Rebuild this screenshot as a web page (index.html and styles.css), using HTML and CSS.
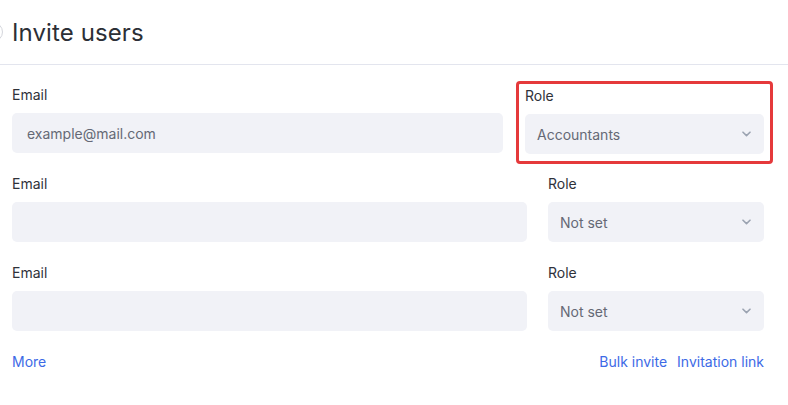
FILE: index.html
```html
<!DOCTYPE html>
<html lang="en">
<head>
<meta charset="utf-8">
<title>Invite users</title>
<link rel="stylesheet" href="styles.css">
</head>
<body>
<div class="page">
  <header class="header">
    <span class="back-ring"></span>
    <h1 class="title">Invite users</h1>
  </header>
  <div class="form">
    <div class="row row-highlight">
      <div class="field">
        <label class="label">Email</label>
        <div class="input placeholder">example@mail.com</div>
      </div>
      <div class="field role-box">
        <label class="label">Role</label>
        <div class="input select"><span>Accountants</span>
          <svg class="chev" width="9" height="6" viewBox="0 0 9 6"><path d="M1 1.2 L4.5 4.6 L8 1.2" fill="none" stroke="#9ba3b1" stroke-width="1.6" stroke-linecap="round" stroke-linejoin="round"/></svg>
        </div>
      </div>
    </div>
    <div class="row">
      <div class="field">
        <label class="label">Email</label>
        <div class="input"></div>
      </div>
      <div class="field">
        <label class="label">Role</label>
        <div class="input select"><span>Not set</span>
          <svg class="chev" width="9" height="6" viewBox="0 0 9 6"><path d="M1 1.2 L4.5 4.6 L8 1.2" fill="none" stroke="#9ba3b1" stroke-width="1.6" stroke-linecap="round" stroke-linejoin="round"/></svg>
        </div>
      </div>
    </div>
    <div class="row">
      <div class="field">
        <label class="label">Email</label>
        <div class="input"></div>
      </div>
      <div class="field">
        <label class="label">Role</label>
        <div class="input select"><span>Not set</span>
          <svg class="chev" width="9" height="6" viewBox="0 0 9 6"><path d="M1 1.2 L4.5 4.6 L8 1.2" fill="none" stroke="#9ba3b1" stroke-width="1.6" stroke-linecap="round" stroke-linejoin="round"/></svg>
        </div>
      </div>
    </div>
    <div class="links">
      <a class="link">More</a>
      <div class="links-right">
        <a class="link">Bulk invite</a>
        <a class="link">Invitation link</a>
      </div>
    </div>
  </div>
</div>
</body>
</html>
```
FILE: styles.css
```css
* { box-sizing: border-box; }
html, body { margin: 0; padding: 0; background: #ffffff; }
body {
  font-family: Inter, "Noto Sans", "Liberation Sans", sans-serif;
  color: #2f323a;
  width: 788px;
  height: 405px;
  overflow: hidden;
}
.header {
  height: 65px;
  display: flex;
  align-items: center;
  gap: 9px;
  border-bottom: 1px solid #e3e5ee;
}
.back-ring {
  width: 20px;
  height: 20px;
  margin-left: -17px;
  border: 1px solid #d4d6dc;
  border-radius: 50%;
  flex: none;
}
.title {
  margin: 0;
  font-size: 24px;
  font-weight: 400;
  color: #2c2f36;
  letter-spacing: 0.1px;
}
.form {
  padding: 20px 24px 0 12px;
  display: flex;
  flex-direction: column;
  gap: 21px;
}
.row {
  display: grid;
  grid-template-columns: 1fr 216px;
  column-gap: 21px;
}
.row-highlight {
  grid-template-columns: 1fr 257px;
  column-gap: 13px;
  margin-right: -9px;
}
.field {
  display: flex;
  flex-direction: column;
  gap: 8px;
}
.role-box {
  border: 3px solid #e5393b;
  border-radius: 4px;
  padding: 2px 6px 7px 6px;
  margin-top: -4px;
  margin-bottom: -11px;
}
.label {
  font-size: 14px;
  line-height: 20px;
  color: #2f323a;
}
.input {
  height: 40px;
  border-radius: 5px;
  background: #f1f2f7;
  padding: 0 15px 0 12px;
  display: flex;
  align-items: center;
  font-size: 14px;
  color: #656975;
}
.placeholder { padding-left: 15px; }
.select {
  justify-content: space-between;
}
.chev { flex: none; margin-right: -2px; }
.links {
  display: flex;
  justify-content: space-between;
  align-items: center;
}
.links-right {
  display: flex;
  gap: 10px;
}
.link {
  font-size: 14px;
  line-height: 20px;
  color: #3d6ae6;
  cursor: pointer;
}
```
